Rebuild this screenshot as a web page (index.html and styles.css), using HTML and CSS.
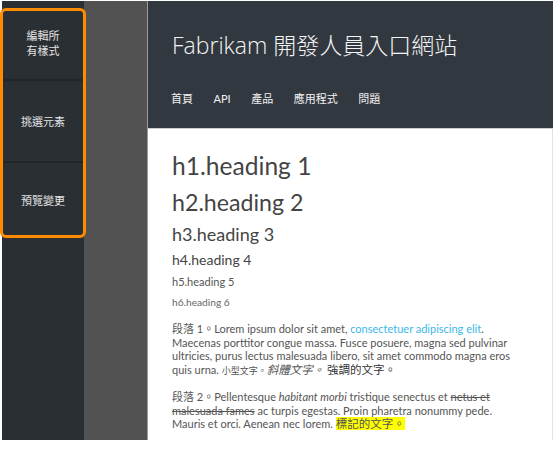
FILE: index.html
```html
<!DOCTYPE html>
<html lang="zh-Hant">
<head>
<meta charset="utf-8">
<title>Fabrikam 開發人員入口網站</title>
<link rel="stylesheet" href="styles.css">
</head>
<body>
<div class="app">
  <aside class="sidebar">
    <ul class="tools">
      <li class="tool tool-edit">編輯所<br>有樣式</li>
      <li class="tool tool-pick">挑選元素</li>
      <li class="tool tool-preview">預覽變更</li>
    </ul>
    <div class="highlight"></div>
  </aside>
  <div class="gutter"></div>
  <div class="site">
    <header class="site-header">
      <h1 class="site-title">Fabrikam 開發人員入口網站</h1>
      <nav class="site-nav">
        <a href="#">首頁</a>
        <a href="#">API</a>
        <a href="#">產品</a>
        <a href="#">應用程式</a>
        <a href="#">問題</a>
      </nav>
    </header>
    <main class="content">
      <h1 class="h1">h1.heading 1</h1>
      <h2 class="h2">h2.heading 2</h2>
      <h3 class="h3">h3.heading 3</h3>
      <h4 class="h4">h4.heading 4</h4>
      <h5 class="h5">h5.heading 5</h5>
      <h6 class="h6">h6.heading 6</h6>
      <p class="para">段落 1。Lorem ipsum dolor sit amet, <a class="link" href="#">consectetuer adipiscing elit</a>. Maecenas porttitor congue massa. Fusce posuere, magna sed pulvinar ultricies, purus lectus malesuada libero, sit amet commodo magna eros quis urna. <small class="small">小型文字。</small><em class="em">斜體文字。</em> <strong class="strong">強調的文字。</strong></p>
      <p class="para">段落 2。Pellentesque <i>habitant morbi</i> tristique senectus et <s>netus et malesuada fames</s> ac turpis egestas. Proin pharetra nonummy pede. Mauris et orci. Aenean nec lorem. <mark class="mark">標記的文字。</mark></p>
    </main>
  </div>
</div>
</body>
</html>
```

FILE: styles.css
```css
html, body {
  margin: 0;
  padding: 0;
  background: #ffffff;
}

body {
  font-family: "Lato", "Noto Sans CJK TC", sans-serif;
}

.app {
  display: flex;
  margin: 1px 0 0 2px;
  width: 551px;
  height: 439px;
}

.sidebar {
  position: relative;
  width: 82px;
  flex: none;
  background: #2a2f33;
}

.tools {
  list-style: none;
  margin: 0;
  padding: 0;
}

.tool {
  display: flex;
  align-items: center;
  justify-content: center;
  box-sizing: border-box;
  text-align: center;
  color: #e4e4e4;
  font-size: 11px;
  line-height: 15px;
}

.tool-edit {
  height: 80px;
  padding-top: 5px;
  border-bottom: 2px solid #222629;
}

.tool-pick {
  height: 82px;
  border-bottom: 2px solid #222629;
}

.tool-preview {
  height: 74px;
}

.highlight {
  position: absolute;
  left: -2px;
  top: 7px;
  width: 86px;
  height: 230px;
  box-sizing: border-box;
  border: 3px solid #ff8c00;
  border-radius: 6px;
  pointer-events: none;
}

.gutter {
  width: 63px;
  flex: none;
  background: #525252;
  border-right: 1px solid #9a9a9a;
}

.site {
  flex: 1;
  display: flex;
  flex-direction: column;
}

.site-header {
  height: 127px;
  flex: none;
  background: #323840;
  border-bottom: 1px solid #c9cdd2;
  padding-left: 23px;
}

.site-title {
  margin: 0;
  padding-top: 28px;
  padding-left: 1px;
  font-family: "Open Sans", "Noto Sans CJK TC", sans-serif;
  font-size: 23px;
  line-height: 32px;
  font-weight: 300;
  color: #f4f4f4;
}

.site-nav {
  display: flex;
  gap: 20.5px;
  margin-top: 30px;
  font-size: 11px;
  line-height: 16px;
}

.site-nav a {
  color: #f2f2f2;
  text-decoration: none;
}

.content {
  flex: 1;
  background: #ffffff;
  border-right: 1px solid #e2e2e2;
  border-bottom: 1px solid #e6e6e6;
  padding: 21px 30px 0 24px;
  color: #555555;
}

.h1, .h2, .h3, .h4, .h5, .h6 {
  margin: 0;
  font-weight: 400;
  color: #444444;
}

.h1 {
  font-size: 24.6px;
  line-height: 32px;
  margin-bottom: 5px;
}

.h2 {
  font-size: 23.2px;
  line-height: 30px;
  margin-bottom: 5px;
}

.h3 {
  font-size: 18px;
  line-height: 24px;
  margin-bottom: 4px;
}

.h4 {
  font-size: 14px;
  line-height: 20px;
  margin-bottom: 4px;
}

.h5 {
  font-size: 11px;
  line-height: 16px;
  margin-bottom: 5px;
  color: #555555;
}

.h6 {
  font-size: 10.2px;
  line-height: 14px;
  margin-bottom: 13px;
  color: #666666;
}

.para {
  margin: 0 0 13px;
  font-size: 11px;
  line-height: 13.5px;
}

.link {
  color: #3cb6e8;
  text-decoration: none;
}

.small {
  font-size: 9px;
}

.em {
  font-size: 11.5px;
}

.strong {
  font-weight: 400;
  color: #333333;
  font-size: 11.5px;
}

.mark {
  background: #ffff00;
  color: #555555;
  font-size: 11.5px;
}
```
